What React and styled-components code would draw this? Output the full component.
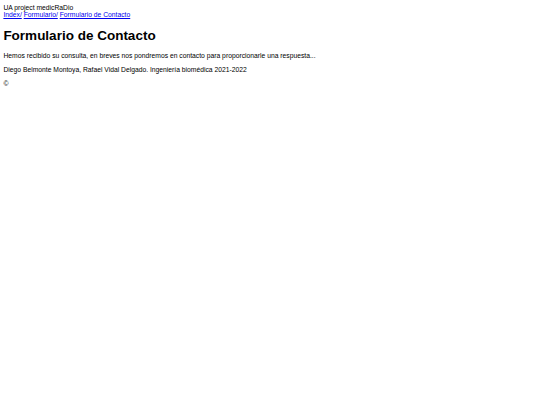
import React from "react";
import styled, { createGlobalStyle } from "styled-components";

// reference is a 1280px wide page shown at 540px, so everything is scaled by 0.421875
const GlobalStyle = createGlobalStyle`
  html, body {
    background: #ffffff;
  }
  body {
    margin: 3.375px;
    font-family: "Liberation Sans", Arial, sans-serif;
    font-size: 6.75px;
    line-height: normal;
    color: #000000;
  }
`;

const Header = styled.header`
  display: block;
  padding-top: 0.6px;
`;

const Brand = styled.div`
  font-size: 6.75px;
`;

const Breadcrumbs = styled.nav`
  display: flex;
  gap: 1.9px;
`;

const Crumb = styled.a`
  color: #0000ee;
  text-decoration: underline;
  cursor: pointer;
`;

const Title = styled.h1`
  font-size: 13.5px;
  font-weight: bold;
  margin: 9.6px 0 9.05px;
`;

const Text = styled.p`
  margin: ${(p) => (p.$lead ? "9.9px" : "6.75px")} 0 6.75px;
`;

const Footer = styled.footer`
  display: block;
`;

const App = () => {
  const crumbs = ["Index/", "Formulario/", "Formulario de Contacto"];

  return (
    <>
      <GlobalStyle />
      <Header>
        <Brand>UA project medicRaDio</Brand>
        <Breadcrumbs>
          {crumbs.map((c) => (
            <Crumb key={c} href="#">{c}</Crumb>
          ))}
        </Breadcrumbs>
      </Header>
      <main>
        <Title>Formulario de Contacto</Title>
        <Text $lead>
          Hemos recibido su consulta, en breves nos pondremos en contacto para proporcionarle una respuesta...
        </Text>
      </main>
      <Footer>
        <Text>Diego Belmonte Montoya, Rafael Vidal Delgado. Ingeniería biomédica 2021-2022</Text>
        <Text>©</Text>
      </Footer>
    </>
  );
};

export default App;
